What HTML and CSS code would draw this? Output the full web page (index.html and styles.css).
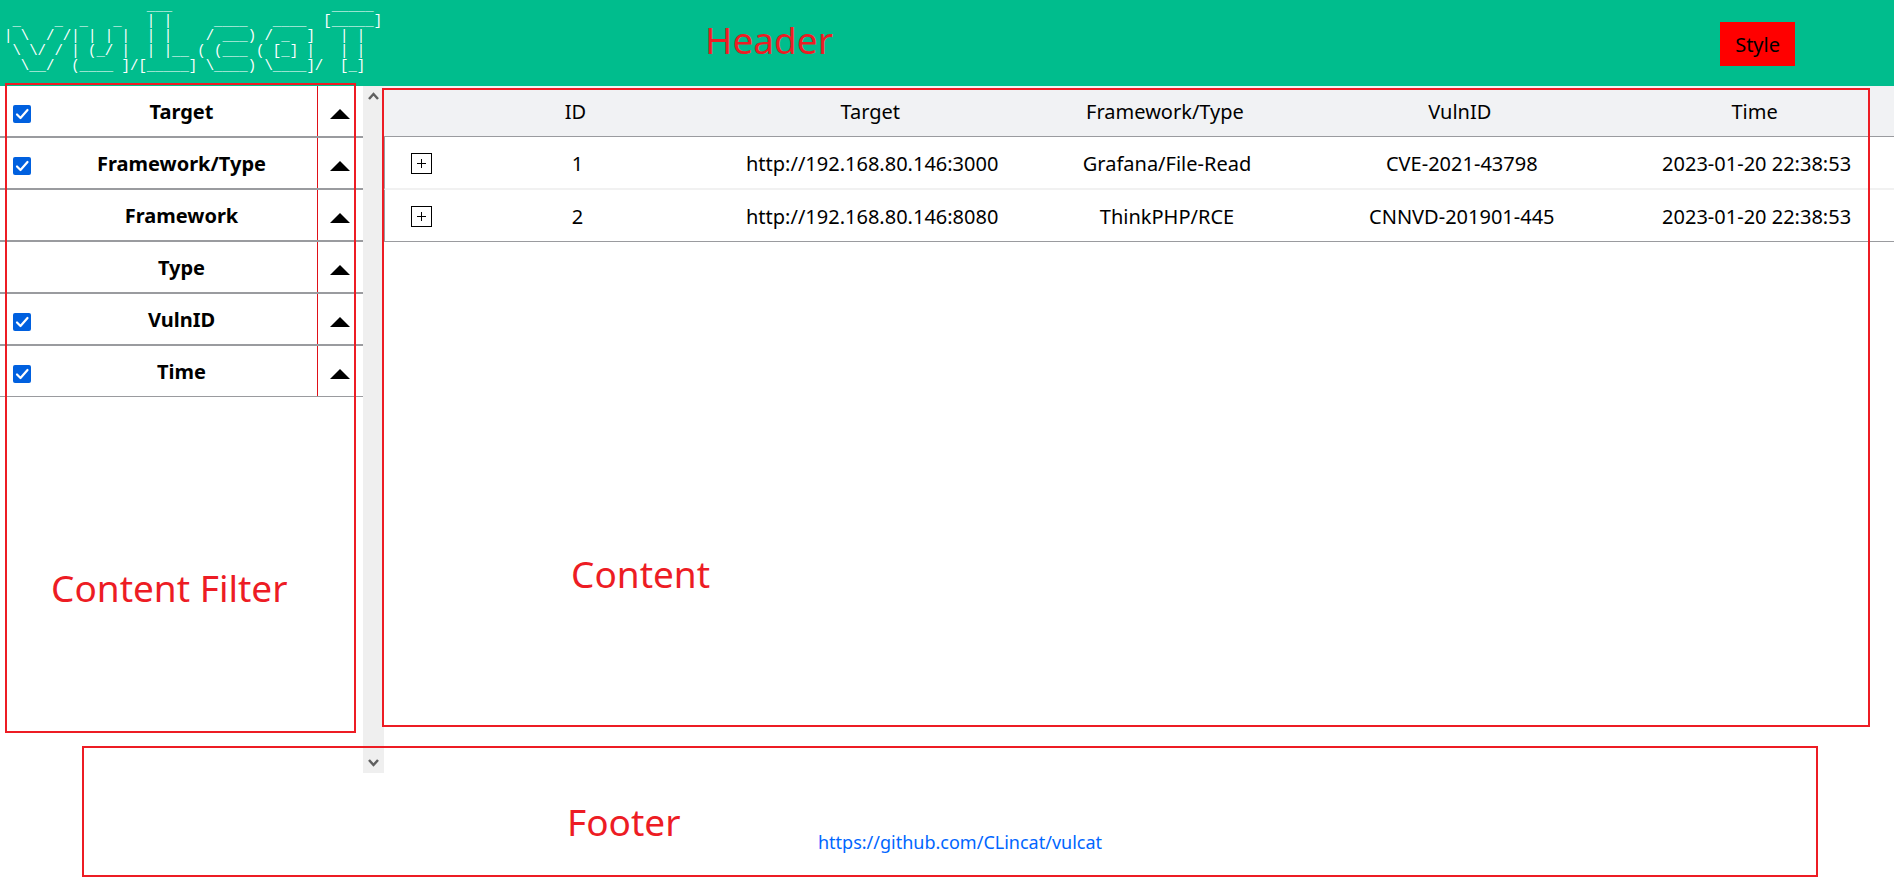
FILE: index.html
```html
<!DOCTYPE html>
<html lang="en">
<head>
<meta charset="utf-8">
<title>vulcat</title>
<link rel="stylesheet" href="styles.css">
</head>
<body>
<header class="header">
<pre class="logo" aria-label="vulcat">                 ___                   _____
 _    _  _   _   | |     ____   ____  [_____]
| \  / /| | | |  | |    / ___) / _  ]   | |
 \ \/ / | (_/ |  | |__ ( (___ ( [_] |   | |
  \__/  (____ ]/[_____] \____) \____]/  [_]</pre>
  <button class="style-button" type="button">Style</button>
</header>

<main class="main">
  <aside class="filter">
    <ul class="filter-list">
      <li class="filter-item">
        <input class="filter-check" type="checkbox" id="f-target" checked>
        <label class="filter-name" for="f-target">Target</label>
        <button class="filter-toggle" type="button" aria-label="Toggle Target"><svg class="triangle" viewBox="0 0 20 10"><path d="M0 10 10 0 20 10Z"/></svg></button>
      </li>
      <li class="filter-item">
        <input class="filter-check" type="checkbox" id="f-both" checked>
        <label class="filter-name" for="f-both">Framework/Type</label>
        <button class="filter-toggle" type="button" aria-label="Toggle Framework/Type"><svg class="triangle" viewBox="0 0 20 10"><path d="M0 10 10 0 20 10Z"/></svg></button>
      </li>
      <li class="filter-item">
        <span class="filter-name">Framework</span>
        <button class="filter-toggle" type="button" aria-label="Toggle Framework"><svg class="triangle" viewBox="0 0 20 10"><path d="M0 10 10 0 20 10Z"/></svg></button>
      </li>
      <li class="filter-item">
        <span class="filter-name">Type</span>
        <button class="filter-toggle" type="button" aria-label="Toggle Type"><svg class="triangle" viewBox="0 0 20 10"><path d="M0 10 10 0 20 10Z"/></svg></button>
      </li>
      <li class="filter-item">
        <input class="filter-check" type="checkbox" id="f-vuln" checked>
        <label class="filter-name" for="f-vuln">VulnID</label>
        <button class="filter-toggle" type="button" aria-label="Toggle VulnID"><svg class="triangle" viewBox="0 0 20 10"><path d="M0 10 10 0 20 10Z"/></svg></button>
      </li>
      <li class="filter-item">
        <input class="filter-check" type="checkbox" id="f-time" checked>
        <label class="filter-name" for="f-time">Time</label>
        <button class="filter-toggle" type="button" aria-label="Toggle Time"><svg class="triangle" viewBox="0 0 20 10"><path d="M0 10 10 0 20 10Z"/></svg></button>
      </li>
    </ul>
  </aside>
  <div class="scrollbar">
    <svg class="chevron" viewBox="0 0 11 8"><path d="M1 7 5.500 2 10 7"/></svg>
    <svg class="chevron" viewBox="0 0 11 8"><path d="M1 1 5.500 6 10 1"/></svg>
  </div>
  <section class="content">
    <table class="results">
      <colgroup><col class="col-expand"><col><col><col><col><col></colgroup>
      <thead>
        <tr><th></th><th>ID</th><th>Target</th><th>Framework/Type</th><th>VulnID</th><th>Time</th></tr>
      </thead>
      <tbody>
        <tr><td class="expand-cell"><button class="expand" type="button" aria-label="Expand 1"><svg class="plus" viewBox="0 0 11 11"><path d="M5.500 1v9M1 5.500h9"/></svg></button></td><td>1</td><td>http://192.168.80.146:3000</td><td>Grafana/File-Read</td><td>CVE-2021-43798</td><td>2023-01-20 22:38:53</td></tr>
        <tr><td class="expand-cell"><button class="expand" type="button" aria-label="Expand 2"><svg class="plus" viewBox="0 0 11 11"><path d="M5.500 1v9M1 5.500h9"/></svg></button></td><td>2</td><td>http://192.168.80.146:8080</td><td>ThinkPHP/RCE</td><td>CNNVD-201901-445</td><td>2023-01-20 22:38:53</td></tr>
      </tbody>
    </table>
  </section>
</main>

<footer class="footer">
  <a class="footer-link" href="https://github.com/CLincat/vulcat">https://github.com/CLincat/vulcat</a>
</footer>

<div class="note note-header">Header</div>
<div class="note note-box note-filter">Content Filter</div>
<div class="note note-box note-content">Content</div>
<div class="note note-box note-footer">Footer</div>
</body>
</html>
```
FILE: styles.css
```css
* {
  box-sizing: border-box;
}

body {
  position: relative;
  display: flex;
  flex-direction: column;
  min-height: 100vh;
  margin: 0;
  overflow-x: hidden;
  background: #fff;
  color: #000;
  font: 20px/28px "Noto Sans", "Open Sans", sans-serif;
}

button {
  margin: 0;
  padding: 0;
  border: 0;
  background: none;
  color: inherit;
  font: inherit;
  cursor: pointer;
}

.header {
  display: flex;
  align-items: flex-start;
  justify-content: space-between;
  height: 86px;
  background: #00bd8d;
}

.logo {
  margin: -1px 0 0 4px;
  color: #fff;
  font: 14px/15px "Liberation Mono", monospace;
}

.style-button {
  margin: 22px 99px 0 0;
  padding: 9px 15px 7px;
  background: #f00;
}

.main {
  display: flex;
  flex: 1;
}

.filter {
  flex: 0 0 363px;
}

.filter-list {
  margin: 0;
  padding: 0;
  list-style: none;
}

.filter-item {
  display: grid;
  grid-template-columns: 46px 1fr 46px;
  align-items: center;
  height: 52px;
  border-bottom: 2px solid #9a9b9f;
}

.filter-item:last-child {
  height: 51px;
  border-bottom-width: 1px;
}

.filter-check {
  appearance: none;
  grid-column: 1;
  width: 18px;
  height: 18px;
  margin: 6px 0 0 13px;
  border-radius: 2px;
  background: #0060df url("data:image/svg+xml,%3Csvg xmlns='http://www.w3.org/2000/svg' viewBox='0 0 18 18'%3E%3Cpath d='M4 9.500 7.500 13 14.500 5' fill='none' stroke='white' stroke-width='2.200' stroke-linecap='round' stroke-linejoin='round'/%3E%3C/svg%3E");
}

.filter-name {
  grid-column: 2;
  padding-top: 2px;
  font-weight: 700;
  text-align: center;
}

.filter-toggle {
  display: flex;
  grid-column: 3;
  align-items: center;
  height: 100%;
  padding: 6px 0 0 12px;
  border-left: 1px solid #e01018;
}

.triangle {
  width: 20px;
  height: 10px;
}

.scrollbar {
  display: flex;
  flex: 0 0 21px;
  flex-direction: column;
  align-items: center;
  justify-content: space-between;
  padding: 6px 0;
  background: #efefef;
}

.chevron {
  width: 11px;
  height: 8px;
  fill: none;
  stroke: #606060;
  stroke-width: 2.5;
}

.content {
  flex: 1;
  min-width: 0;
  overflow: hidden;
}

.results {
  width: calc(100% + 8px);
  border-spacing: 0;
  border-collapse: separate;
  table-layout: fixed;
  text-align: center;
  white-space: nowrap;
}

.col-expand {
  width: 44px;
}

.results th {
  height: 51px;
  padding: 2px 0 0;
  border-bottom: 1px solid #9a9b9f;
  background: #f1f2f4;
  font-weight: 400;
}

.results td {
  height: 52px;
  padding: 2px 0 0 4px;
  border-bottom: 2px solid #f1f1f1;
}

.results tr:first-child td {
  height: 53px;
}

.results tr:last-child td {
  border-bottom: 1px solid #9a9b9f;
}

.results .expand-cell {
  padding: 2px 0 0 26px;
  border-left: 1px solid #9a9b9f;
}

.expand {
  display: flex;
  align-items: center;
  justify-content: center;
  width: 21px;
  height: 21px;
  border: 1px solid #000;
}

.plus {
  width: 11px;
  height: 11px;
  stroke: #000;
}

.footer {
  display: flex;
  justify-content: center;
  padding: 55px 0 33px 26px;
}

.footer-link {
  color: #0066ff;
  font-size: 18px;
  text-decoration: none;
}

/* Region annotations laid over the page */
.note {
  position: absolute;
  color: #ed1c24;
  font-size: 37px;
  line-height: 48px;
  pointer-events: none;
}

.note-box {
  border: 2px solid #ed1c24;
}

.note-header {
  top: 16px;
  left: 705px;
}

.note-filter {
  top: 83px;
  bottom: 156px;
  left: 5px;
  width: 351px;
  padding: 479px 0 0 44px;
}

.note-content {
  top: 88px;
  right: 24px;
  bottom: 162px;
  left: 382px;
  padding: 460px 0 0 187px;
}

.note-footer {
  right: 76px;
  bottom: 12px;
  left: 82px;
  height: 131px;
  padding: 50px 0 0 483px;
}
```
